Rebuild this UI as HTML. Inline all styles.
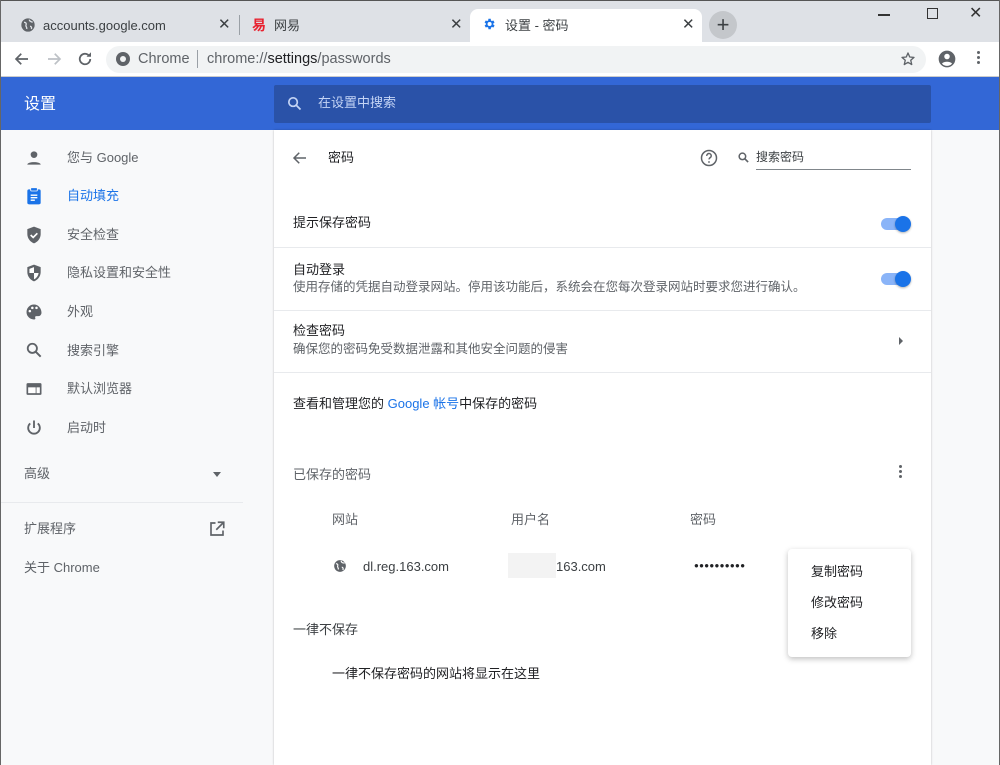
<!DOCTYPE html>
<html><head><meta charset="utf-8">
<style>
*{box-sizing:border-box;margin:0;padding:0}
body{width:1000px;height:765px;overflow:hidden;font-family:"Liberation Sans","Noto Sans CJK SC",sans-serif;background:#f8f9fa;position:relative;color:#202124;font-size:13px;line-height:1}
.abs{position:absolute}
svg{display:block}
.t{font-size:13px}
</style></head><body>
<div class="abs" style="left:0;top:0;width:1000px;height:42px;background:#dee1e6;border-top:1px solid #555"></div>
<div class="abs" style="left:0;top:0;width:1px;height:765px;background:#666"></div>
<div class="abs" style="left:999px;top:0;width:1px;height:765px;background:#666"></div>
<svg class="abs" style="left:20px;top:17px" width="16" height="16" viewBox="0 0 24 24"><circle cx="12" cy="12" r="10" fill="#5f6368"/><path d="M6 8c3 0 4 2 3 4s2 3 1 6M14 4c0 3 3 3 5 4M15 14c2 0 3 2 2 4" stroke="#dee1e6" stroke-width="2" fill="none"/></svg>
<div class="abs t" style="left:43px;top:19px;color:#3c4043">accounts.google.com</div>
<div class="abs" style="left:218px;top:17px;font-size:15px;color:#3c4043">✕</div>
<div class="abs" style="left:239px;top:15px;width:1px;height:20px;background:#9aa0a6"></div>
<div class="abs" style="left:252px;top:18px;color:#e8212f;font-weight:bold;font-size:14px">易</div>
<div class="abs t" style="left:274px;top:19px;color:#3c4043">网易</div>
<div class="abs" style="left:450px;top:17px;font-size:15px;color:#3c4043">✕</div>
<div class="abs" style="left:470px;top:9px;width:232px;height:33px;background:#fff;border-radius:8px 8px 0 0"></div>
<svg class="abs" style="left:482px;top:17px" width="14" height="14" viewBox="0 0 24 24"><path fill="#1a73e8" d="M19.4 13a7.5 7.5 0 000-2l2.1-1.6-2-3.5-2.5 1a7 7 0 00-1.7-1L15 3h-4l-.4 2.9a7 7 0 00-1.7 1l-2.5-1-2 3.5L6.6 11a7.5 7.5 0 000 2l-2.1 1.6 2 3.5 2.5-1a7 7 0 001.7 1L11 21h4l.4-2.9a7 7 0 001.7-1l2.5 1 2-3.5zM13 15.5a3.5 3.5 0 110-7 3.5 3.5 0 010 7z"/></svg>
<div class="abs t" style="left:505px;top:19px;color:#3c4043">设置 - 密码</div>
<div class="abs" style="left:682px;top:17px;font-size:15px;color:#3c4043">✕</div>
<div class="abs" style="left:709px;top:11px;width:28px;height:28px;border-radius:50%;background:#c4c7cb;text-align:center;line-height:27px;font-size:22px;color:#3c4043">+</div>
<div class="abs" style="left:878px;top:14px;width:12px;height:1.5px;background:#333"></div>
<div class="abs" style="left:927px;top:8px;width:11px;height:11px;border:1.3px solid #333"></div>
<div class="abs" style="left:969px;top:6px;font-size:16px;color:#333">✕</div>
<div class="abs" style="left:1px;top:42px;width:998px;height:35px;background:#fff;border-bottom:1px solid #ccc"></div>
<svg class="abs" style="left:13px;top:50px" width="18" height="18" viewBox="0 0 24 24"><path d="M20 12H5M11 5l-7 7 7 7" stroke="#5f6368" stroke-width="2.2" fill="none"/></svg>
<svg class="abs" style="left:45px;top:50px" width="18" height="18" viewBox="0 0 24 24"><path d="M4 12h15M13 5l7 7-7 7" stroke="#bdc1c6" stroke-width="2.2" fill="none"/></svg>
<svg class="abs" style="left:76px;top:50px" width="18" height="18" viewBox="0 0 24 24"><path d="M19 12a7 7 0 11-2.1-5" stroke="#5f6368" stroke-width="2.4" fill="none"/><path d="M20 3v6h-6z" fill="#5f6368"/></svg>
<div class="abs" style="left:106px;top:46px;width:820px;height:27px;background:#f1f3f4;border-radius:14px"></div>
<div class="abs" style="left:116px;top:52px;width:14px;height:14px;border-radius:50%;background:#5f6368"></div>
<div class="abs" style="left:120px;top:56px;width:6px;height:6px;border-radius:50%;background:#f1f3f4"></div>
<div class="abs" style="left:138px;top:52px;font-size:14.5px;color:#5f6368">Chrome</div>
<div class="abs" style="left:197px;top:50px;width:1px;height:18px;background:#9aa0a6"></div>
<div class="abs" style="left:207px;top:52px;font-size:14.5px;color:#5f6368">chrome://<span style="color:#202124">settings</span>/passwords</div>
<svg class="abs" style="left:900px;top:51px" width="16" height="16" viewBox="0 0 24 24"><path d="M12 3l2.6 6 6.4.6-4.9 4.3 1.5 6.4L12 17l-5.6 3.3 1.5-6.4L3 9.6 9.4 9z" stroke="#5f6368" stroke-width="2" fill="none" stroke-linejoin="round"/></svg>
<svg class="abs" style="left:937px;top:49px" width="20" height="20" viewBox="0 0 24 24"><circle cx="12" cy="12" r="10" fill="#5f6368"/><circle cx="12" cy="9" r="3.3" fill="#fff"/><path d="M6 17.5c2-3 10-3 12 0a8 8 0 01-12 0z" fill="#fff"/></svg>
<div class="abs" style="left:977px;top:51px;width:3px;height:3px;border-radius:50%;background:#5f6368;box-shadow:0 5px #5f6368,0 10px #5f6368"></div>
<div class="abs" style="left:1px;top:77px;width:998px;height:53px;background:#3367d6"></div>
<div class="abs" style="left:24px;top:97px;font-size:16px;color:#fff">设置</div>
<div class="abs" style="left:274px;top:85px;width:657px;height:38px;background:#2a52a8;border-radius:2px"></div>
<svg class="abs" style="left:286px;top:95px" width="17" height="17" viewBox="0 0 24 24"><circle cx="10" cy="10" r="6" stroke="#c4d4f5" stroke-width="2.4" fill="none"/><path d="M14.5 14.5l6 6" stroke="#c4d4f5" stroke-width="2.4"/></svg>
<div class="abs" style="left:318px;top:96px;font-size:13px;color:#c4d4f5">在设置中搜索</div>
<div class="abs" style="left:1px;top:130px;width:272px;height:635px;background:#f8f9fa"></div>
<svg class="abs" style="left:24px;top:148px" width="20" height="20" viewBox="0 0 24 24"><circle cx="12" cy="8" r="4" fill="#5f6368"/><path d="M4 20c0-4 16-4 16 0z" fill="#5f6368"/></svg>
<div class="abs" style="left:67px;top:151px;color:#5f6368">您与 Google</div>
<svg class="abs" style="left:24px;top:186px" width="20" height="20" viewBox="0 0 24 24"><rect x="4" y="4" width="16" height="18" rx="2" fill="#1a73e8"/><rect x="8" y="2" width="8" height="4" rx="1" fill="#1a73e8" stroke="#f8f9fa"/><path d="M8 11h8M8 14h8M8 17h5" stroke="#fff" stroke-width="1.6"/></svg>
<div class="abs" style="left:67px;top:189px;color:#1a73e8">自动填充</div>
<svg class="abs" style="left:24px;top:225px" width="20" height="20" viewBox="0 0 24 24"><path d="M12 2l8 3v6c0 5-3.5 9.5-8 11-4.5-1.5-8-6-8-11V5z" fill="#5f6368"/><path d="M8 12l3 3 5-5" stroke="#fff" stroke-width="2" fill="none"/></svg>
<div class="abs" style="left:67px;top:228px;color:#5f6368">安全检查</div>
<svg class="abs" style="left:24px;top:263px" width="20" height="20" viewBox="0 0 24 24"><path d="M12 2l8 3v6c0 5-3.5 9.5-8 11-4.5-1.5-8-6-8-11V5z" fill="#5f6368"/><path d="M12 5v7H6.5V7z M12 12h5.5c-.5 3.5-2.7 6.5-5.5 7.5z" fill="#fff"/></svg>
<div class="abs" style="left:67px;top:266px;color:#5f6368">隐私设置和安全性</div>
<svg class="abs" style="left:24px;top:302px" width="20" height="20" viewBox="0 0 24 24"><path d="M12 3a9 9 0 000 18c1.5 0 2-1 1.5-2s0-2 1.5-2h2a4 4 0 004-4c0-5.5-4-10-9-10z" fill="#5f6368"/><circle cx="7" cy="11" r="1.5" fill="#fff"/><circle cx="10" cy="7" r="1.5" fill="#fff"/><circle cx="15" cy="7" r="1.5" fill="#fff"/></svg>
<div class="abs" style="left:67px;top:305px;color:#5f6368">外观</div>
<svg class="abs" style="left:24px;top:340px" width="20" height="20" viewBox="0 0 24 24"><circle cx="10" cy="10" r="5.5" stroke="#5f6368" stroke-width="2.2" fill="none"/><path d="M14 14l6 6" stroke="#5f6368" stroke-width="2.4"/></svg>
<div class="abs" style="left:67px;top:344px;color:#5f6368">搜索引擎</div>
<svg class="abs" style="left:24px;top:379px" width="20" height="20" viewBox="0 0 24 24"><rect x="3" y="5" width="18" height="14" rx="1.5" fill="#5f6368"/><rect x="5" y="10" width="9" height="7" fill="#fff"/><rect x="15" y="10" width="4" height="7" fill="#fff"/></svg>
<div class="abs" style="left:67px;top:382px;color:#5f6368">默认浏览器</div>
<svg class="abs" style="left:24px;top:418px" width="20" height="20" viewBox="0 0 24 24"><path d="M12 3v9" stroke="#5f6368" stroke-width="2.2"/><path d="M7.5 6.5a7 7 0 109 0" stroke="#5f6368" stroke-width="2.2" fill="none"/></svg>
<div class="abs" style="left:67px;top:421px;color:#5f6368">启动时</div>
<div class="abs" style="left:24px;top:467px;color:#5f6368">高级</div>
<div class="abs" style="left:213px;top:472px;width:0;height:0;border-left:4px solid transparent;border-right:4px solid transparent;border-top:5px solid #5f6368"></div>
<div class="abs" style="left:1px;top:502px;width:242px;height:1px;background:#e8eaed"></div>
<div class="abs" style="left:24px;top:522px;color:#5f6368">扩展程序</div>
<svg class="abs" style="left:208px;top:520px" width="18" height="18" viewBox="0 0 24 24"><path d="M10 4H4v16h16v-6" stroke="#5f6368" stroke-width="2.2" fill="none"/><path d="M13 3h8v8M21 3L11 13" stroke="#5f6368" stroke-width="2.2" fill="none"/></svg>
<div class="abs" style="left:24px;top:561px;color:#5f6368">关于 Chrome</div>
<div class="abs" style="left:274px;top:130px;width:657px;height:635px;background:#fff;box-shadow:0 0 2px rgba(0,0,0,.25)"></div>
<svg class="abs" style="left:291px;top:149px" width="18" height="18" viewBox="0 0 24 24"><path d="M20 12H5M11 5l-7 7 7 7" stroke="#5f6368" stroke-width="2" fill="none"/></svg>
<div class="abs" style="left:328px;top:151px;color:#202124">密码</div>
<svg class="abs" style="left:699px;top:148px" width="20" height="20" viewBox="0 0 24 24"><circle cx="12" cy="12" r="9" stroke="#5f6368" stroke-width="1.8" fill="none"/><path d="M9.3 9.5a2.7 2.7 0 115 1.2c-.8 1-2.3 1.4-2.3 3" stroke="#5f6368" stroke-width="1.8" fill="none"/><circle cx="12" cy="16.8" r="1.1" fill="#5f6368"/></svg>
<svg class="abs" style="left:737px;top:151px" width="13" height="13" viewBox="0 0 24 24"><circle cx="10" cy="10" r="6" stroke="#5f6368" stroke-width="2.8" fill="none"/><path d="M14.5 14.5l6 6" stroke="#5f6368" stroke-width="3"/></svg>
<div class="abs" style="left:756px;top:151px;font-size:12px;color:#3c4043">搜索密码</div>
<div class="abs" style="left:756px;top:169px;width:155px;height:1px;background:#80868b"></div>
<div class="abs" style="left:293px;top:216px">提示保存密码</div>
<div class="abs" style="left:881px;top:218px;width:26px;height:12px;border-radius:6px;background:#8ab4f8"></div>
<div class="abs" style="left:895px;top:216px;width:16px;height:16px;border-radius:50%;background:#1a73e8;box-shadow:0 1px 2px rgba(0,0,0,.3)"></div>
<div class="abs" style="left:274px;top:247px;width:657px;height:1px;background:#e8eaed"></div>
<div class="abs" style="left:293px;top:263px">自动登录</div>
<div class="abs" style="left:293px;top:281px;font-size:12.5px;color:#5f6368">使用存储的凭据自动登录网站。停用该功能后，系统会在您每次登录网站时要求您进行确认。</div>
<div class="abs" style="left:881px;top:273px;width:26px;height:12px;border-radius:6px;background:#8ab4f8"></div>
<div class="abs" style="left:895px;top:271px;width:16px;height:16px;border-radius:50%;background:#1a73e8;box-shadow:0 1px 2px rgba(0,0,0,.3)"></div>
<div class="abs" style="left:274px;top:310px;width:657px;height:1px;background:#e8eaed"></div>
<div class="abs" style="left:293px;top:324px">检查密码</div>
<div class="abs" style="left:293px;top:343px;font-size:12.5px;color:#5f6368">确保您的密码免受数据泄露和其他安全问题的侵害</div>
<div class="abs" style="left:899px;top:337px;width:0;height:0;border-top:4px solid transparent;border-bottom:4px solid transparent;border-left:4px solid #5f6368"></div>
<div class="abs" style="left:274px;top:372px;width:657px;height:1px;background:#e8eaed"></div>
<div class="abs" style="left:293px;top:397px">查看和管理您的 <span style="color:#1a73e8">Google 帐号</span>中保存的密码</div>
<div class="abs" style="left:293px;top:468px;color:#5f6368">已保存的密码</div>
<div class="abs" style="left:899px;top:465px;width:3px;height:3px;border-radius:50%;background:#5f6368;box-shadow:0 5px #5f6368,0 10px #5f6368"></div>
<div class="abs" style="left:332px;top:513px;color:#5f6368">网站</div>
<div class="abs" style="left:511px;top:513px;color:#5f6368">用户名</div>
<div class="abs" style="left:690px;top:513px;color:#5f6368">密码</div>
<svg class="abs" style="left:333px;top:559px" width="14" height="14" viewBox="0 0 24 24"><circle cx="12" cy="12" r="10" fill="#5f6368"/><path d="M5 8c3 0 4 2 3 4s2 3 1 6M14 3c0 3 3 4 6 4M15 14c2 0 3 2 2 5" stroke="#fff" stroke-width="2" fill="none"/></svg>
<div class="abs" style="left:363px;top:560px;color:#3c4043">dl.reg.163.com</div>
<div class="abs" style="left:508px;top:553px;width:48px;height:25px;background:#f3f3f3"></div>
<div class="abs" style="left:556px;top:560px;color:#3c4043">163.com</div>
<div class="abs" style="left:694px;top:562px;color:#202124;letter-spacing:0.3px;font-size:8px">●●●●●●●●●●</div>
<div class="abs" style="left:293px;top:623px;color:#3c4043">一律不保存</div>
<div class="abs" style="left:332px;top:667px;color:#202124">一律不保存密码的网站将显示在这里</div>
<div class="abs" style="left:788px;top:549px;width:123px;height:108px;background:#fff;border-radius:4px;box-shadow:0 2px 6px rgba(0,0,0,.25)"></div>
<div class="abs" style="left:811px;top:565px;color:#202124">复制密码</div>
<div class="abs" style="left:811px;top:596px;color:#202124">修改密码</div>
<div class="abs" style="left:811px;top:627px;color:#202124">移除</div>
</body></html>
